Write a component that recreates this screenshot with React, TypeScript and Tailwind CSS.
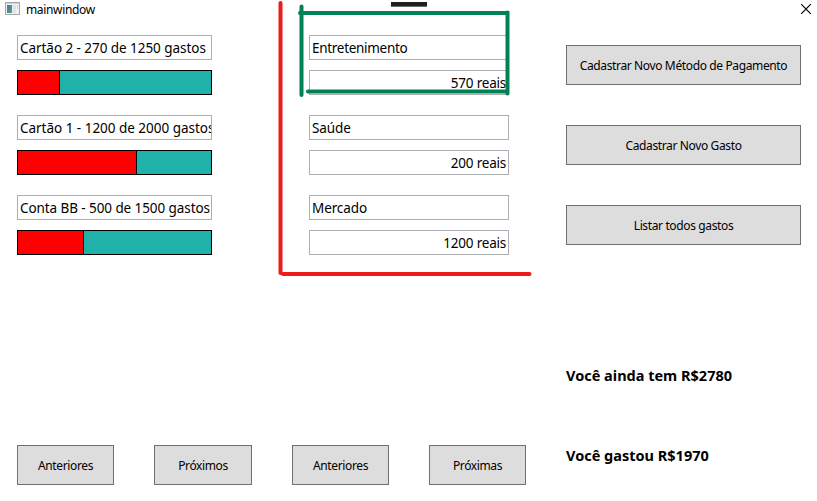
type Card = { label: string; spent: number; spacing: string };

const cards: Card[] = [
  { label: "Cartão 2 - 270 de 1250 gastos", spent: 42, spacing: "tracking-[-0.05px]" },
  { label: "Cartão 1 - 1200 de 2000 gastos", spent: 119, spacing: "tracking-[-0.02px]" },
  { label: "Conta BB - 500 de 1500 gastos", spent: 66, spacing: "tracking-[-0.08px]" },
];

const categories = [
  { name: "Entretenimento", total: "570 reais", spacing: "tracking-[-0.3px]" },
  { name: "Saúde", total: "200 reais", spacing: "tracking-[-0.1px]" },
  { name: "Mercado", total: "1200 reais", spacing: "tracking-[-0.1px]" },
];

const fieldClass =
  "h-[25px] overflow-hidden whitespace-nowrap border border-[#abadb3] bg-white px-[2px] text-[13.5px] leading-[24px]";
const buttonClass =
  "h-10 shrink-0 whitespace-nowrap border border-[#707070] bg-[#dddddd] text-center text-[12px] leading-[39px] tracking-[-0.37px]";

function TitleBar() {
  return (
    <header className="flex h-5 items-start justify-between">
      <div className="flex pl-[5px]">
        <svg className="mt-[2px]" width="15" height="13" viewBox="0 0 15 13">
          <defs>
            <linearGradient id="pane" x1="0" y1="0" x2="1" y2="1">
              <stop offset="0" stopColor="#3f77a8" />
              <stop offset="1" stopColor="#58a878" />
            </linearGradient>
          </defs>
          <rect x="0.5" y="0.5" width="14" height="12" fill="#f2f2f2" stroke="#a4a8ac" />
          <rect x="1" y="1" width="13" height="1" fill="#d0d3d6" />
          <rect x="2" y="3" width="5" height="8" fill="url(#pane)" />
          <rect x="8" y="3" width="3" height="8" fill="#dfe2e8" />
          <rect x="12" y="3" width="1" height="4" fill="#c4dccb" />
        </svg>
        <span className="ml-[6px] text-[12px] leading-[19px] tracking-[-0.35px]">mainwindow</span>
      </div>
      <svg className="mr-[6px] mt-[4px]" width="10" height="10" viewBox="0 0 10 10">
        <path d="M0 0 L10 10 M10 0 L0 10" stroke="#000" strokeWidth="1.2" />
      </svg>
    </header>
  );
}

function CardList() {
  return (
    <section className="flex w-[195px] flex-col gap-5">
      {cards.map((c) => (
        <div key={c.label} className="flex flex-col gap-[10px]">
          <div className={`${fieldClass} ${c.spacing}`}>{c.label}</div>
          <div className="flex h-[25px] border border-black bg-[#20b2aa]">
            <div className="border-r border-black bg-[#ff0000]" style={{ width: c.spent }} />
          </div>
        </div>
      ))}
    </section>
  );
}

function CategoryList() {
  return (
    <section className="flex w-[200px] flex-col gap-5">
      {categories.map((c) => (
        <div key={c.name} className="flex flex-col gap-[10px]">
          <div className={`${fieldClass} ${c.spacing}`}>{c.name}</div>
          <div className={`${fieldClass} text-right tracking-[-0.22px]`}>{c.total}</div>
        </div>
      ))}
    </section>
  );
}

function Markup() {
  return (
    <svg className="pointer-events-none absolute left-0 top-0" width="817" height="501" viewBox="0 0 817 501" fill="none" strokeLinecap="round">
      <rect x="391" y="2" width="36" height="4" fill="#1f1f1f" />
      <path d="M391 6.5H427" stroke="#6b6b6b" strokeLinecap="butt" />
      <g stroke="#ed1c1c" strokeWidth="4">
        <path d="M280.5 3V273" />
        <path d="M283 274H529.5" />
      </g>
      <g stroke="#008255" strokeWidth="4">
        <path d="M301.5 6.5V95" />
        <path d="M300 13H507" />
        <path d="M507.5 12.5V93.5" />
        <path d="M308 91.5H507" />
      </g>
    </svg>
  );
}

export default function App() {
  return (
    <div className="relative h-[501px] w-[817px] overflow-hidden bg-white font-['Noto_Sans','Open_Sans',sans-serif] text-black">
      <TitleBar />
      <main className="flex">
        <div className="flex h-[465px] w-[566px] flex-col justify-between pl-[17px] pt-[15px]">
          <div className="flex gap-[97px]">
            <CardList />
            <CategoryList />
          </div>
          <div className="flex gap-10">
            <button className={`${buttonClass} w-[97px]`}>Anteriores</button>
            <button className={`${buttonClass} w-[98px]`}>Próximos</button>
            <button className={`${buttonClass} w-[97px]`}>Anteriores</button>
            <button className={`${buttonClass} w-[97px]`}>Próximas</button>
          </div>
        </div>
        <aside className="flex w-[235px] flex-col pt-[25px]">
          <div className="flex flex-col gap-10">
            <button className={buttonClass}>Cadastrar Novo Método de Pagamento</button>
            <button className={buttonClass}>Cadastrar Novo Gasto</button>
            <button className={buttonClass}>Listar todos gastos</button>
          </div>
          <div className="mt-[120px] flex flex-col gap-[60px] text-[14.5px] font-bold leading-5">
            <p>Você ainda tem R$2780</p>
            <p>Você gastou R$1970</p>
          </div>
        </aside>
      </main>
      <Markup />
    </div>
  );
}
